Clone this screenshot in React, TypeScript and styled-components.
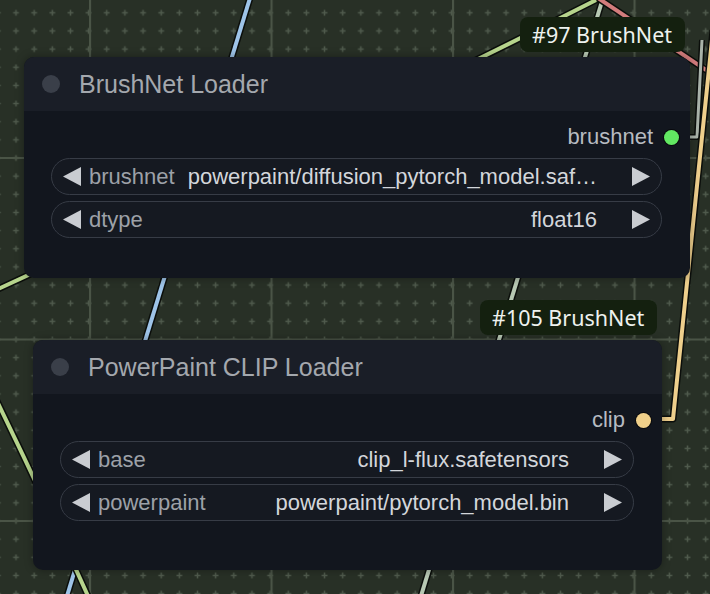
import styled, { createGlobalStyle } from 'styled-components';

const GlobalStyle = createGlobalStyle`
  html, body {
    margin: 0;
    padding: 0;
    background: #283026;
    overflow: hidden;
  }
  body {
    font-family: "Liberation Sans", Arial, sans-serif;
  }
`;

const Canvas = styled.div`
  position: relative;
  width: 710px;
  height: 594px;
  overflow: hidden;
  background: #283026;
`;

const Backdrop = styled.svg`
  position: absolute;
  inset: 0;
  width: 100%;
  height: 100%;
`;

type Placed = { $x: number; $y: number };

const NodeBox = styled.div<Placed & { $w: number; $h: number }>`
  position: absolute;
  left: ${p => p.$x}px;
  top: ${p => p.$y}px;
  width: ${p => p.$w}px;
  height: ${p => p.$h}px;
  display: flex;
  flex-direction: column;
  background: #12161e;
  border-radius: 10px;
  overflow: hidden;
  box-shadow: 0 0 8px rgba(0, 0, 0, 0.35);
`;

const TitleBar = styled.div`
  flex: none;
  height: 54px;
  display: flex;
  align-items: center;
  gap: 19px;
  padding-left: 18px;
  background: #1a1e27;
`;

const TitleDot = styled.span`
  width: 18px;
  height: 18px;
  border-radius: 50%;
  background: #3a3f49;
`;

const TitleText = styled.span`
  font-size: 25px;
  color: #a4a8ae;
  white-space: nowrap;
`;

const Body = styled.div`
  display: flex;
  flex-direction: column;
  padding: 15px 28px 0 27px;
`;

const OutputRow = styled.div`
  height: 22px;
  margin-right: -17px;
  margin-bottom: 10px;
  display: flex;
  align-items: center;
  justify-content: flex-end;
  gap: 11px;
`;

const OutputLabel = styled.span`
  font-size: 22px;
  color: #b7bbc1;
`;

const OutputDot = styled.span<{ $color: string }>`
  width: 15px;
  height: 15px;
  border-radius: 50%;
  background: ${p => p.$color};
  box-shadow: 0 0 0 1px rgba(0, 0, 0, 0.6);
`;

const WidgetList = styled.div`
  display: flex;
  flex-direction: column;
  gap: 6px;
`;

const Widget = styled.div`
  height: 37px;
  box-sizing: border-box;
  display: flex;
  align-items: center;
  padding: 0 11px 0 11px;
  border: 1.5px solid #373c46;
  border-radius: 19px;
  background: #151921;
  font-size: 22px;
`;

const WidgetLabel = styled.span`
  flex: none;
  margin-left: 8px;
  color: #9da1a8;
  white-space: nowrap;
`;

const WidgetValue = styled.span`
  flex: 1;
  min-width: 0;
  margin-right: 35px;
  text-align: right;
  white-space: nowrap;
  overflow: hidden;
  color: #d3d6db;
`;

const Badge = styled.div<Placed>`
  position: absolute;
  left: ${p => p.$x}px;
  top: ${p => p.$y}px;
  height: 35px;
  display: flex;
  align-items: center;
  padding: 0 13px 0 12px;
  border-radius: 8px;
  background: #14200f;
  color: #eef2ee;
  font-family: "Noto Sans", "Open Sans", sans-serif;
  font-size: 21.5px;
  white-space: nowrap;
`;

const Arrow = ({ dir }: { dir: 'left' | 'right' }) => (
  <svg width="18" height="19" viewBox="0 0 18 19" style={{ flex: 'none' }}>
    <polygon
      points={dir === 'left' ? '18,0 18,19 0,9.5' : '0,0 0,19 18,9.5'}
      fill="#c9ccd1"
    />
  </svg>
);

type Field = { label: string; value: string };

type NodeProps = {
  x: number;
  y: number;
  w: number;
  h: number;
  title: string;
  output: string;
  outputColor: string;
  fields: Field[];
};

const GraphNode = ({ x, y, w, h, title, output, outputColor, fields }: NodeProps) => (
  <NodeBox $x={x} $y={y} $w={w} $h={h}>
    <TitleBar>
      <TitleDot />
      <TitleText>{title}</TitleText>
    </TitleBar>
    <Body>
      <OutputRow>
        <OutputLabel>{output}</OutputLabel>
        <OutputDot $color={outputColor} />
      </OutputRow>
      <WidgetList>
        {fields.map(f => (
          <Widget key={f.label}>
            <Arrow dir="left" />
            <WidgetLabel>{f.label}</WidgetLabel>
            <WidgetValue>{f.value}</WidgetValue>
            <Arrow dir="right" />
          </Widget>
        ))}
      </WidgetList>
    </Body>
  </NodeBox>
);

const wires = [
  { d: 'M 250 -2 L 67 596', color: '#9ec4e8', w: 4 },
  { d: 'M 603 -2 L 421 596', color: '#b7c8b3', w: 4 },
  { d: 'M -4 290 Q 300 150 600 -2', color: '#b6d48c', w: 4 },
  { d: 'M -6 395 Q 45 500 88 596', color: '#b6d48c', w: 4 },
  { d: 'M 598 -2 L 712 74', color: '#d27c7c', w: 4 },
  { d: 'M 672 137 L 697 137 L 702 40', color: '#aab4aa', w: 3 },
  { d: 'M 645 419 L 673 419 L 713 30', color: '#eecf8c', w: 4 },
];

const Grid = () => (
  <Backdrop viewBox="0 0 710 594">
    <defs>
      <pattern id="dots" x={16 - 9.075} y={12.8 - 9.075} width={18.15} height={18.15} patternUnits="userSpaceOnUse">
        <path d="M9.075 6.2 V11.95 M6.2 9.075 H11.95" stroke="#505b4d" strokeWidth={1.5} />
      </pattern>
      <pattern id="major" x={89} y={157} width={181.5} height={181.5} patternUnits="userSpaceOnUse">
        <path d="M1 0 V181.5 M0 1 H181.5" stroke="#4a5446" strokeWidth={2.2} />
      </pattern>
    </defs>
    <rect width="710" height="594" fill="#283026" />
    <rect width="710" height="594" fill="url(#dots)" />
    <rect width="710" height="594" fill="url(#major)" />
    {wires.map((wire, i) => (
      <g key={i} fill="none" strokeLinejoin="round">
        <path d={wire.d} stroke="#0b0e0b" strokeWidth={wire.w + 3} />
        <path d={wire.d} stroke={wire.color} strokeWidth={wire.w} />
      </g>
    ))}
  </Backdrop>
);

export default function App() {
  return (
    <Canvas>
      <GlobalStyle />
      <Grid />
      <GraphNode
        x={24}
        y={57}
        w={666}
        h={221}
        title="BrushNet Loader"
        output="brushnet"
        outputColor="#62e862"
        fields={[
          { label: 'brushnet', value: 'powerpaint/diffusion_pytorch_model.saf…' },
          { label: 'dtype', value: 'float16' },
        ]}
      />
      <GraphNode
        x={33}
        y={340}
        w={629}
        h={230}
        title="PowerPaint CLIP Loader"
        output="clip"
        outputColor="#f0d08a"
        fields={[
          { label: 'base', value: 'clip_l-flux.safetensors' },
          { label: 'powerpaint', value: 'powerpaint/pytorch_model.bin' },
        ]}
      />
      <Badge $x={520} $y={17}>#97 BrushNet</Badge>
      <Badge $x={480} $y={300}>#105 BrushNet</Badge>
    </Canvas>
  );
}
